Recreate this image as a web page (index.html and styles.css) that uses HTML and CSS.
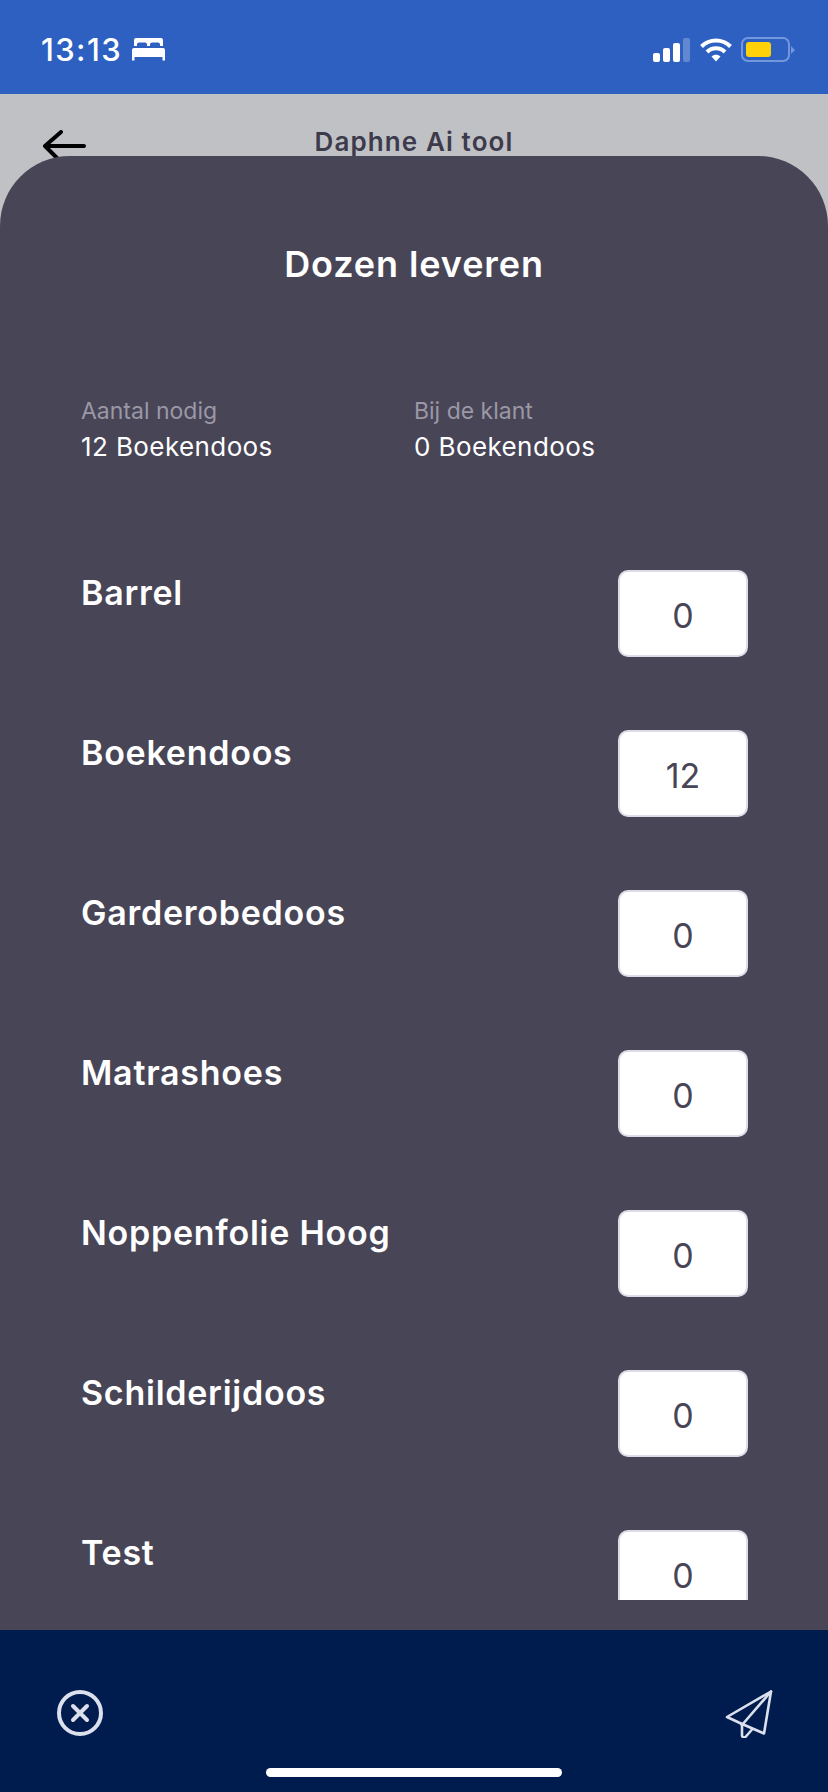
FILE: index.html
```html
<!DOCTYPE html>
<html lang="nl">
<head>
<meta charset="utf-8">
<title>Dozen leveren</title>
<link rel="stylesheet" href="styles.css">
</head>
<body>
<div class="screen">
  <div class="statusbar">
    <div class="status-left">
      <span class="time">13:13</span>
      <svg class="bed" viewBox="0 0 33 23" width="33" height="23"><path fill="#fff" d="M4 0h25a2 2 0 0 1 2 2v6h-3V6.500a2 2 0 0 0-2-2h-6a2 2 0 0 0-2 2V8h-3V6.500a2 2 0 0 0-2-2H7a2 2 0 0 0-2 2V8H2V2a2 2 0 0 1 2-2zM2 10h29a2 2 0 0 1 2 2v10.500h-2.500V19H2.500v3.500H0V12a2 2 0 0 1 2-2z"/></svg>
    </div>
    <div class="status-right">
      <svg viewBox="0 0 38 24" width="38" height="24"><g fill="#fff"><rect x="0" y="15" width="7" height="9" rx="2"/><rect x="10" y="10" width="7" height="14" rx="2"/><rect x="20" y="5" width="7" height="19" rx="2"/></g><rect x="30" y="0" width="7" height="24" rx="2" fill="#fff" opacity=".25"/></svg>
      <svg viewBox="0 0 32 24" width="32" height="24"><g fill="none" stroke="#fff" stroke-width="4"><path d="M1.500 8.500C9.500 .500 22.500 .500 30.500 8.500"/><path d="M7 14c5-5 13-5 18 0"/></g><path fill="#fff" d="M11.500 18.500c2.500-2.200 6.500-2.200 9 0L16 23.500z"/></svg>
      <div class="battery"><div class="battery-fill"></div></div>
      <div class="battery-cap"></div>
    </div>
  </div>
  <div class="page">
    <header class="appbar">
      <svg class="back" viewBox="0 0 44 32" width="44" height="32"><path d="M42 16H3M19 2 3 16l14 14" fill="none" stroke="#000" stroke-width="4" stroke-linecap="round" stroke-linejoin="round"/></svg>
      <span class="appbar-title">Daphne Ai tool</span>
    </header>
    <section class="sheet">
      <h1 class="sheet-title">Dozen leveren</h1>
      <div class="summary">
        <div class="summary-col"><div class="summary-label">Aantal nodig</div><div class="summary-value">12 Boekendoos</div></div>
        <div class="summary-col"><div class="summary-label">Bij de klant</div><div class="summary-value">0 Boekendoos</div></div>
      </div>
      <div class="list">
        <div class="row"><span class="row-label">Barrel</span><div class="qty">0</div></div>
        <div class="row"><span class="row-label">Boekendoos</span><div class="qty">12</div></div>
        <div class="row"><span class="row-label">Garderobedoos</span><div class="qty">0</div></div>
        <div class="row"><span class="row-label">Matrashoes</span><div class="qty">0</div></div>
        <div class="row"><span class="row-label">Noppenfolie Hoog</span><div class="qty">0</div></div>
        <div class="row"><span class="row-label">Schilderijdoos</span><div class="qty">0</div></div>
        <div class="row"><span class="row-label">Test</span><div class="qty">0</div></div>
      </div>
    </section>
  </div>
  <footer class="footer">
    <div class="footer-actions">
      <svg viewBox="0 0 46 46" width="46" height="46"><circle cx="23" cy="23" r="21" fill="none" stroke="#dbe0ec" stroke-width="4"/><path d="M16 16l14 14M30 16 16 30" fill="none" stroke="#dbe0ec" stroke-width="4" stroke-linecap="round"/></svg>
      <svg viewBox="0 0 48 48" width="48" height="48"><g fill="none" stroke="#dbe0ec" stroke-width="2.600" stroke-linejoin="round" stroke-linecap="round"><path d="M46 1.500 2 27l14 6.500 23 10z"/><path d="M46 1.500 17 35v10.500c0 1.500 2 2.500 3.500 1.500l6.500-7.500"/><path d="M16 33.500 17 35"/></g></svg>
    </div>
    <div class="home-indicator"></div>
  </footer>
</div>
</body>
</html>
```

FILE: styles.css
```css
* { box-sizing: border-box; }
html, body { margin: 0; padding: 0; }
body { font-family: "Inter", "Open Sans", sans-serif; background: #c0c1c5; }
.screen { width: 828px; height: 1792px; display: flex; flex-direction: column; overflow: hidden; }

.statusbar { height: 94px; flex: none; background: #2d60c1; display: flex; justify-content: space-between; align-items: center; padding: 5px 33px 0 41px; }
.status-left { display: flex; align-items: center; gap: 10px; }
.time { color: #fff; font-size: 31px; font-weight: 500; letter-spacing: 1.4px; font-family: "Inter", sans-serif; }
.status-right { display: flex; align-items: center; gap: 9px; }
.battery { width: 49px; height: 25px; border: 2px solid #7397dc; border-radius: 7px; padding: 3px; }
.battery-fill { width: 25px; height: 100%; background: #fed109; border-radius: 3px; }
.battery-cap { width: 0; height: 0; margin-left: -8px; border-left: 4px solid #7397dc; border-top: 4px solid transparent; border-bottom: 4px solid transparent; }

.page { flex: 1; position: relative; min-height: 0; }
.appbar { height: 62px; display: flex; align-items: flex-start; justify-content: center; position: relative; padding-top: 33px; }
.back { position: absolute; left: 42px; top: 36px; }
.appbar-title { color: #3c3a4b; font-size: 26px; font-weight: 600; line-height: 30px; letter-spacing: 1.1px; }

.sheet { position: absolute; left: 0; right: 0; top: 62px; bottom: 0; background: #484557; border-radius: 70px 70px 0 0; display: flex; flex-direction: column; }
.sheet-title { margin: 0; text-align: center; color: #fff; font-size: 36px; font-weight: 600; line-height: 40px; letter-spacing: 0.9px; padding-top: 88px; }
.summary { display: flex; padding: 0 81px; margin-top: 113px; flex: none; }
.summary-col { width: 334px; }
.summary-label { color: #9b98a6; font-size: 23px; line-height: 28px; }
.summary-value { color: #fff; font-size: 26px; line-height: 36px; margin-top: 4px; letter-spacing: 0.4px; }

.list { margin-top: 105px; height: 1030px; flex: none; overflow: hidden; padding: 0 80px 0 81px; }
.row { height: 160px; display: flex; justify-content: space-between; align-items: flex-start; }
.row-label { color: #fff; font-size: 34px; font-weight: 600; line-height: 40px; letter-spacing: 0.75px; padding-top: 3px; }
.qty { width: 130px; height: 87px; background: #fff; border: 2px solid #dcdbe6; border-radius: 10px; display: flex; align-items: center; justify-content: center; color: #484557; font-size: 34px; padding-top: 3px; }

.footer { height: 162px; flex: none; background: #001c4e; position: relative; z-index: 1; display: flex; flex-direction: column; }
.footer-actions { display: flex; justify-content: space-between; padding: 60px 55px 0 57px; }
.home-indicator { width: 296px; height: 9px; background: #fff; border-radius: 5px; position: absolute; left: 266px; bottom: 15px; }
```
